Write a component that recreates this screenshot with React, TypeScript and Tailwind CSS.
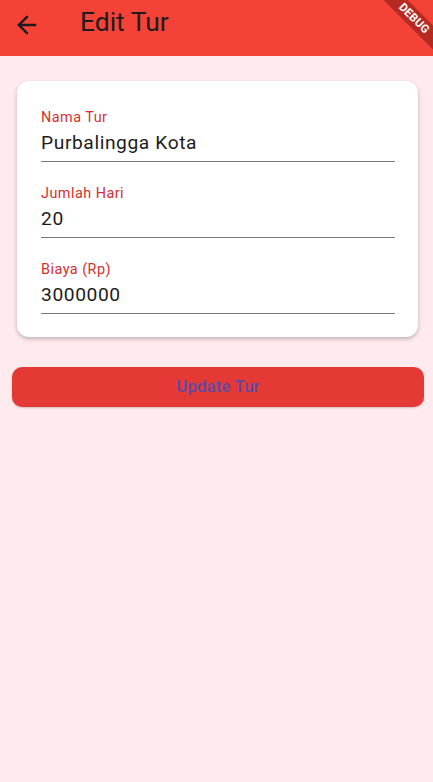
import { ArrowLeft } from "lucide-react";

const fields = [
  { label: "Nama Tur", value: "Purbalingga Kota" },
  { label: "Jumlah Hari", value: "20" },
  { label: "Biaya (Rp)", value: "3000000" },
];

function Field({ label, value }: { label: string; value: string }) {
  return (
    <div className="flex flex-col">
      <span className="text-[14.4px] leading-[17px] tracking-[0.48px] text-[#d32f2f]">{label}</span>
      <span className="mt-1 text-[19.2px] leading-[26px] tracking-[0.6px] text-[#1d1b20]">{value}</span>
      <div className="mt-[5px] h-px bg-[#79747e]" />
    </div>
  );
}

export default function App() {
  return (
    <div
      className="relative min-h-[782px] overflow-hidden bg-[#ffebee]"
      style={{ fontFamily: "Roboto, 'Noto Sans', sans-serif" }}
    >
      <header className="flex h-14 items-start bg-[#f44336] pl-[13px] pt-[6px]">
        <ArrowLeft className="mt-[5px] h-[28px] w-[28px] text-[#1d1b20]" strokeWidth={2.1} />
        <h1 className="ml-[39px] text-[26.4px] leading-8 text-[#1d1b20]">Edit Tur</h1>
      </header>

      {/* debug ribbon */}
      <div className="pointer-events-none absolute left-[362px] top-[10px] flex h-[17px] w-[104px] rotate-45 items-center justify-center bg-[#b52a22]">
        <span className="text-[11.5px] font-bold leading-none tracking-[0.2px] text-white">DEBUG</span>
      </div>

      <main className="pl-3 pr-[9px] pt-[25px]">
        <div className="ml-[5px] mr-[6px] flex flex-col gap-[23px] rounded-xl bg-white pb-[23px] pl-6 pr-[23px] pt-[28px] shadow-[0_2px_4px_rgba(0,0,0,0.25)]">
          {fields.map((f) => (
            <Field key={f.label} label={f.label} value={f.value} />
          ))}
        </div>

        <button className="mt-[30px] flex h-10 w-full items-center justify-center rounded-[10px] bg-[#e53935] text-[16.8px] font-medium tracking-[0.12px] text-[#5c4ba6] shadow-[0_1px_2px_rgba(0,0,0,0.2)]">
          Update Tur
        </button>
      </main>
    </div>
  );
}
